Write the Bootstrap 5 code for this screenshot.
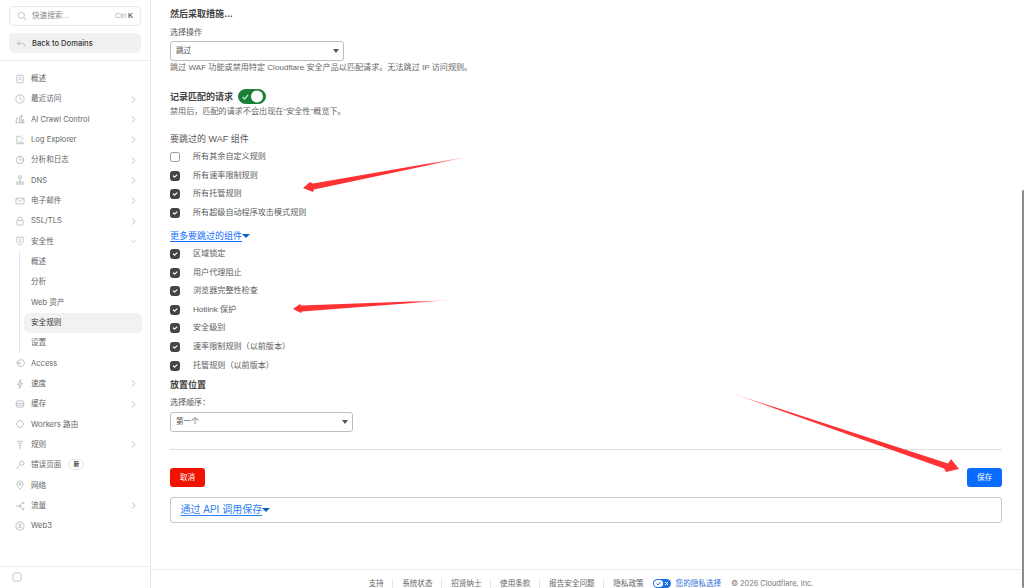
<!DOCTYPE html>
<html lang="zh-CN">
<head>
<meta charset="utf-8">
<title>安全规则</title>
<link href="https://cdn.jsdelivr.net/npm/bootstrap@5.3.0/dist/css/bootstrap.min.css" rel="stylesheet">
<style>
html,body{height:100%;overflow:hidden}
body{font-family:"Liberation Sans","Noto Sans CJK SC",sans-serif;font-size:8px;color:#555;background:#fff;position:relative}
.app-shell{height:588px}
.side-bar{width:151px;flex:none;border-right:1px solid #e8e8e8;height:588px}
.search-box{height:20px;margin:6px 9px 0 9px;border:1px solid #e6e6e6;border-radius:5px;padding:0 7px 0 7px;color:#8a8a8a;font-size:7.6px}
.search-box svg{margin-right:5px}
.kbd-hint{margin-left:auto;color:#aaa;font-size:7px}
.kbd-hint b{color:#666;font-weight:600}
.back-btn{height:20px;margin:7px 9px 0 9px;background:#f1f1f1;border-radius:5px;padding:1px 7px 0;color:#333;font-size:7.6px;font-weight:500;font-family:Inter,"Noto Sans CJK SC",sans-serif}
.back-btn svg{margin-right:6px}
.side-rule{border-top:1px solid #ececec;margin-top:7px;margin-bottom:7.6px}
.nav-rows{height:497.4px}
.nav-line{height:20.33px;padding:0 14px 0 15px;color:#666;font-size:7.6px;font-family:Inter,"Noto Sans CJK SC",sans-serif}
.nav-line svg.ico{margin-right:6px;flex:none}
.nav-line .chev{margin-left:auto;flex:none}
.sub-group{margin-left:19px;border-left:1px solid #e6e6e6;height:101.65px}
.sub-line{height:20.33px;padding-left:11px;color:#666;font-size:7.6px;font-family:Inter,"Noto Sans CJK SC",sans-serif}
.sub-line.is-on{margin-left:4px;padding-left:7px;margin-right:8px;background:#f2f2f2;border-radius:5px;color:#333}
.new-tag{margin-left:7px;border:1px solid #e4e4e4;border-radius:8px;height:11px;width:16px;font-size:5.5px;font-weight:700;color:#333;line-height:9px;text-align:center}
.side-foot{border-top:1px solid #ececec;height:22px;padding-left:12px}
.main-pane{flex:1 1 auto;min-width:0;height:588px;margin-right:3px}
.form-area{flex:1 1 auto;padding:8px 19px 0 19px}
.title-line{font-size:9px;font-weight:700;line-height:12px;color:#444}
.field-label{font-size:8px;line-height:10px;color:#555;margin-top:7.5px}
.sel-box{font-size:7.6px;height:20px;padding:0 5px;margin-top:3.5px;border:1px solid #bdbdbd;border-radius:3px;color:#555;background-size:6px 4px;background-position:right 4px center;
background-image:url("data:image/svg+xml,%3csvg xmlns='http://www.w3.org/2000/svg' viewBox='0 0 6 4'%3e%3cpath fill='%23555' d='M0 0h6L3 4z'/%3e%3c/svg%3e")}
.sel-a{width:174px}
.sel-b{width:183px}
.help-line{font-size:8.1px;line-height:10px;color:#666;margin-top:2px}
.log-row{height:15px;margin-top:16px}
.log-row .title-line{margin-right:5px}
.log-switch{margin:0;padding:0;min-height:0}
.log-switch .form-check-input{width:28px;height:15px;margin:0;float:none;display:block;background-color:#1a7f37;border-color:#1a7f37;
background-image:url("data:image/svg+xml,%3csvg xmlns='http://www.w3.org/2000/svg' viewBox='0 0 28 15'%3e%3ccircle cx='20' cy='7.5' r='6' fill='%23fff'/%3e%3cpath d='M5.5 8l2 2 3.5-4' fill='none' stroke='%23bfe5c9' stroke-width='1.3'/%3e%3c/svg%3e");background-size:28px 15px;background-position:0 0}
.mt-help{margin-top:3px}
.group-label{font-size:9px;line-height:12px;margin-top:16px;color:#555}
.check-list{margin-top:2.7px}
.check-line{height:18.6px;margin:0;padding:0;min-height:0;display:flex;align-items:center}
.check-line .form-check-input{width:10px;height:10px;margin:0;float:none;flex:none;border-color:#999;border-radius:2.5px}
.check-line .form-check-input:checked{background-color:#444;border-color:#444}
.check-line .form-check-label{margin-left:13px;font-size:8.1px;color:#5c5c5c}
.more-link{font-size:9px;line-height:12px;color:#0d6efd;text-decoration:underline;text-underline-offset:1.5px;display:inline-block}
.more-wrap{height:12px;margin-top:8px}
.drop-tri{display:inline-block;width:0;height:0;border-left:4px solid transparent;border-right:4px solid transparent;border-top:4.5px solid #0d5fc8;vertical-align:1px}
.place-head{margin-top:4px}
.end-rule{margin:17px 0 0 0;border-color:#ddd;opacity:1}
.act-row{margin-top:18px}
.act-btn{font-size:7.6px;height:19.5px;width:35px;padding:0;border-radius:3px;color:#fff;border:0}
.act-cancel{background:#ee1400}
.act-save{background:#0a6cff}
.api-box{height:26px;margin-top:9.5px;border:1px solid #c8c8c8;border-radius:3px;padding-left:9.5px}
.api-box a{font-size:10px;color:#2f80f7;text-decoration:underline;text-underline-offset:1.5px}
.page-foot{height:19px;flex:none;border-top:1px solid #ececec;padding:9px 0 0 1px;font-size:7.6px;color:#666}
.foot-item{padding:0 8.800px;border-right:1px solid #e6e6e6;line-height:9px}
.foot-plain{padding:0 0 0 8.800px;line-height:9px}
.foot-blue{color:#2b6fd6;padding-left:5px;line-height:9px}
.foot-copy{padding-left:10px;color:#777;font-size:7.4px;line-height:9px;font-family:Inter,"Noto Sans CJK SC",sans-serif}
.foot-toggle{margin-left:9px}
.scroll-thumb{position:absolute;right:0;top:190px;width:2.5px;height:398px;background:#8b8b8b;border-radius:1px}
.arrow-layer{position:absolute;left:0;top:0;width:1024px;height:588px;pointer-events:none}
.ico{width:10px;height:10px;fill:none;stroke:#ababab;stroke-width:1.1}
.chev{width:5px;height:7px;fill:none;stroke:#b8b8b8;stroke-width:1}
</style>
</head>
<body>
<div class="app-shell d-flex">
  <aside class="side-bar d-flex flex-column">
    <div class="search-box d-flex align-items-center">
      <svg class="ico" viewBox="0 0 16 16"><circle cx="7" cy="7" r="5"/><path d="M11 11l4 4"/></svg>
      <span>快速搜索...</span><span class="kbd-hint">Ctrl <b>K</b></span>
    </div>
    <div class="back-btn d-flex align-items-center">
      <svg class="ico" viewBox="0 0 16 16"><path d="M6 3L2 7l4 3M2 7h8c2 0 4 1.500 4 5"/></svg>
      <span>Back to Domains</span>
    </div>
    <div class="side-rule"></div>
    <nav class="nav-rows">
      <div class="nav-line d-flex align-items-center"><svg class="ico" viewBox="0 0 16 16"><rect x="3" y="2" width="10" height="12" rx="1"/><path d="M6 6h4M6 9h4"/></svg>概述</div>
      <div class="nav-line d-flex align-items-center"><svg class="ico" viewBox="0 0 16 16"><circle cx="8" cy="8" r="6.500"/><path d="M8 4v4l3 2"/></svg>最近访问<svg class="chev" viewBox="0 0 5 7"><path d="M1 .5L4 3.500 1 6.500"/></svg></div>
      <div class="nav-line d-flex align-items-center"><svg class="ico" viewBox="0 0 16 16"><path d="M2 14V7h3M7 14V5h3v9M12 14V9h2v5M1 14h14M11 1v4M9 3h4"/></svg>AI Crawl Control<svg class="chev" viewBox="0 0 5 7"><path d="M1 .5L4 3.500 1 6.500"/></svg></div>
      <div class="nav-line d-flex align-items-center"><svg class="ico" viewBox="0 0 16 16"><path d="M3 14V2h6l3 3v3M3 14h11M7 13v-3M10 13V9M13 13v-2"/></svg>Log Explorer<svg class="chev" viewBox="0 0 5 7"><path d="M1 .5L4 3.500 1 6.500"/></svg></div>
      <div class="nav-line d-flex align-items-center"><svg class="ico" viewBox="0 0 16 16"><circle cx="8" cy="8" r="6"/><path d="M8 2v6h6"/></svg>分析和日志<svg class="chev" viewBox="0 0 5 7"><path d="M1 .5L4 3.500 1 6.500"/></svg></div>
      <div class="nav-line d-flex align-items-center"><svg class="ico" viewBox="0 0 16 16"><path d="M8 5v5M3 14v-3h10v3M8 10v4"/><rect x="6" y="1.500" width="4" height="3.500"/><path d="M1 14.500h14"/></svg>DNS<svg class="chev" viewBox="0 0 5 7"><path d="M1 .5L4 3.500 1 6.500"/></svg></div>
      <div class="nav-line d-flex align-items-center"><svg class="ico" viewBox="0 0 16 16"><rect x="1.500" y="3.500" width="13" height="9" rx="1"/><path d="M2 4l6 5 6-5"/></svg>电子邮件<svg class="chev" viewBox="0 0 5 7"><path d="M1 .5L4 3.500 1 6.500"/></svg></div>
      <div class="nav-line d-flex align-items-center"><svg class="ico" viewBox="0 0 16 16"><rect x="3" y="7" width="10" height="7.500" rx="1"/><path d="M5 7V4.500a3 3 0 0 1 6 0V7"/></svg>SSL/TLS<svg class="chev" viewBox="0 0 5 7"><path d="M1 .5L4 3.500 1 6.500"/></svg></div>
      <div class="nav-line d-flex align-items-center"><svg class="ico" viewBox="0 0 16 16"><path d="M3 2h10v6c0 3-2 5-5 6.500C5 13 3 11 3 8z"/><path d="M8 4.500v7"/></svg>安全性<svg class="chev chev-down" viewBox="0 0 7 5"><path d="M.5 1L3.500 4 6.500 1"/></svg></div>
      <div class="sub-group">
        <div class="sub-line d-flex align-items-center">概述</div>
        <div class="sub-line d-flex align-items-center">分析</div>
        <div class="sub-line d-flex align-items-center">Web 资产</div>
        <div class="sub-line is-on d-flex align-items-center">安全规则</div>
        <div class="sub-line d-flex align-items-center">设置</div>
      </div>
      <div class="nav-line d-flex align-items-center"><svg class="ico" viewBox="0 0 16 16"><circle cx="9.500" cy="8" r="5.500"/><path d="M1 8h8M7 6l2 2-2 2"/></svg>Access</div>
      <div class="nav-line d-flex align-items-center"><svg class="ico" viewBox="0 0 16 16"><path d="M9 1L4 9h4l-1 6 5-8H8z"/></svg>速度<svg class="chev" viewBox="0 0 5 7"><path d="M1 .5L4 3.500 1 6.500"/></svg></div>
      <div class="nav-line d-flex align-items-center"><svg class="ico" viewBox="0 0 16 16"><rect x="2" y="3" width="12" height="10" rx="2"/><path d="M2 7h12M2 10h12"/></svg>缓存<svg class="chev" viewBox="0 0 5 7"><path d="M1 .5L4 3.500 1 6.500"/></svg></div>
      <div class="nav-line d-flex align-items-center"><svg class="ico" viewBox="0 0 16 16"><path d="M6 2.500L2 8l4 5.500M10 2.500L14 8l-4 5.500M6 2.500h4M6 13.500h4"/></svg>Workers 路由</div>
      <div class="nav-line d-flex align-items-center"><svg class="ico" viewBox="0 0 16 16"><path d="M3 2h10M4.500 5h7M6 8h4M8 8v7"/></svg>规则<svg class="chev" viewBox="0 0 5 7"><path d="M1 .5L4 3.500 1 6.500"/></svg></div>
      <div class="nav-line d-flex align-items-center"><svg class="ico" viewBox="0 0 16 16"><circle cx="11" cy="5" r="3.500"/><path d="M8.500 7.500L2 14M4 12l2 2"/></svg>错误页面<span class="new-tag">新</span></div>
      <div class="nav-line d-flex align-items-center"><svg class="ico" viewBox="0 0 16 16"><path d="M8 15C5 11 3 9 3 6.500a5 5 0 0 1 10 0C13 9 11 11 8 15z"/><circle cx="8" cy="6.500" r="1.800"/></svg>网络</div>
      <div class="nav-line d-flex align-items-center"><svg class="ico" viewBox="0 0 16 16"><path d="M1 8h6M8 7l4-4M8 9l4 4"/><circle cx="8" cy="8" r="1.500"/><circle cx="13" cy="3" r="1.300"/><circle cx="13" cy="13" r="1.300"/></svg>流量<svg class="chev" viewBox="0 0 5 7"><path d="M1 .5L4 3.500 1 6.500"/></svg></div>
      <div class="nav-line d-flex align-items-center"><svg class="ico" viewBox="0 0 16 16"><circle cx="8" cy="8" r="6.500"/><circle cx="8" cy="6.500" r="1.800"/><path d="M4.500 11.500c2-2 5-2 7 0"/></svg>Web3</div>
    </nav>
    <div class="side-foot d-flex align-items-center">
      <svg class="ico" viewBox="0 0 16 16"><rect x="1.500" y="1.500" width="13" height="13" rx="3"/></svg>
    </div>
  </aside>
  <main class="main-pane d-flex flex-column">
    <div class="form-area">
      <div class="title-line">然后采取措施…</div>
      <label class="field-label d-block" for="act">选择操作</label>
      <select id="act" class="form-select sel-box sel-a"><option>跳过</option></select>
      <div class="help-line">跳过 WAF 功能或禁用特定 Cloudflare 安全产品以匹配请求。无法跳过 IP 访问规则。</div>
      <div class="log-row d-flex align-items-center">
        <div class="title-line">记录匹配的请求</div>
        <div class="form-check form-switch log-switch"><input class="form-check-input" type="checkbox" role="switch" checked aria-label="记录匹配的请求"></div>
      </div>
      <div class="help-line mt-help">禁用后，匹配的请求不会出现在"安全性"概览下。</div>
      <div class="group-label">要跳过的 WAF 组件</div>
      <div class="check-list">
        <div class="form-check check-line"><input class="form-check-input" type="checkbox" id="c1"><label class="form-check-label" for="c1">所有其余自定义规则</label></div>
        <div class="form-check check-line"><input class="form-check-input" type="checkbox" id="c2" checked><label class="form-check-label" for="c2">所有速率限制规则</label></div>
        <div class="form-check check-line"><input class="form-check-input" type="checkbox" id="c3" checked><label class="form-check-label" for="c3">所有托管规则</label></div>
        <div class="form-check check-line"><input class="form-check-input" type="checkbox" id="c4" checked><label class="form-check-label" for="c4">所有超级自动程序攻击模式规则</label></div>
      </div>
      <div class="more-wrap"><a href="#" class="more-link">更多要跳过的组件</a><span class="drop-tri"></span></div>
      <div class="check-list">
        <div class="form-check check-line"><input class="form-check-input" type="checkbox" id="d1" checked><label class="form-check-label" for="d1">区域锁定</label></div>
        <div class="form-check check-line"><input class="form-check-input" type="checkbox" id="d2" checked><label class="form-check-label" for="d2">用户代理阻止</label></div>
        <div class="form-check check-line"><input class="form-check-input" type="checkbox" id="d3" checked><label class="form-check-label" for="d3">浏览器完整性检查</label></div>
        <div class="form-check check-line"><input class="form-check-input" type="checkbox" id="d4" checked><label class="form-check-label" for="d4">Hotlink 保护</label></div>
        <div class="form-check check-line"><input class="form-check-input" type="checkbox" id="d5" checked><label class="form-check-label" for="d5">安全级别</label></div>
        <div class="form-check check-line"><input class="form-check-input" type="checkbox" id="d6" checked><label class="form-check-label" for="d6">速率限制规则（以前版本）</label></div>
        <div class="form-check check-line"><input class="form-check-input" type="checkbox" id="d7" checked><label class="form-check-label" for="d7">托管规则（以前版本）</label></div>
      </div>
      <div class="title-line place-head">放置位置</div>
      <label class="field-label d-block" for="ord">选择顺序：</label>
      <select id="ord" class="form-select sel-box sel-b"><option>第一个</option></select>
      <hr class="end-rule">
      <div class="act-row d-flex justify-content-between">
        <button type="button" class="btn act-btn act-cancel">取消</button>
        <button type="button" class="btn act-btn act-save">保存</button>
      </div>
      <div class="api-box d-flex align-items-center"><a href="#">通过 API 调用保存</a><span class="drop-tri"></span></div>
    </div>
    <footer class="page-foot d-flex align-items-center justify-content-center">
      <span class="foot-item">支持</span>
      <span class="foot-item">系统状态</span>
      <span class="foot-item">招贤纳士</span>
      <span class="foot-item">使用条款</span>
      <span class="foot-item">报告安全问题</span>
      <span class="foot-plain">隐私政策</span>
      <svg class="foot-toggle" width="18" height="9" viewBox="0 0 18 9"><rect width="18" height="9" rx="4.500" fill="#1f6fe0"/><rect x="1" y="1" width="9" height="7" rx="3.500" fill="#fff"/><path d="M3.500 4.500l1.500 1.500 2.500-3" fill="none" stroke="#1f6fe0" stroke-width="1"/><path d="M12 3l3 3M15 3l-3 3" stroke="#fff" stroke-width="1"/></svg>
      <span class="foot-blue">您的隐私选择</span>
      <span class="foot-copy">© 2026 Cloudflare, Inc.</span>
    </footer>
  </main>
</div>
<div class="scroll-thumb"></div>
<svg class="arrow-layer" viewBox="0 0 1024 588" aria-hidden="true">
  <defs>
    <linearGradient id="fa" gradientUnits="userSpaceOnUse" x1="472" y1="156" x2="425" y2="165"><stop offset="0" stop-color="#ff3a3a" stop-opacity="0"/><stop offset="1" stop-color="#f33"/></linearGradient>
    <linearGradient id="fb" gradientUnits="userSpaceOnUse" x1="452" y1="300" x2="410" y2="302"><stop offset="0" stop-color="#ff3a3a" stop-opacity="0"/><stop offset="1" stop-color="#f33"/></linearGradient>
    <linearGradient id="fc" gradientUnits="userSpaceOnUse" x1="725" y1="391" x2="775" y2="408"><stop offset="0" stop-color="#ff3a3a" stop-opacity="0"/><stop offset="1" stop-color="#f33"/></linearGradient>
  </defs>
  <polygon fill="url(#fa)" points="472,156 313,183.500 310,182 303,188 313,192 314,189.500"/>
  <polygon fill="url(#fb)" points="452,300 301,305.500 300,304 293,309 301,313 302,311.500"/>
  <polygon fill="url(#fc)" points="725,391 948,463.500 951,459 959,469 946,472 944,468.500"/>
</svg>
<script src="https://cdn.jsdelivr.net/npm/bootstrap@5.3.0/dist/js/bootstrap.bundle.min.js"></script>
</body>
</html>
